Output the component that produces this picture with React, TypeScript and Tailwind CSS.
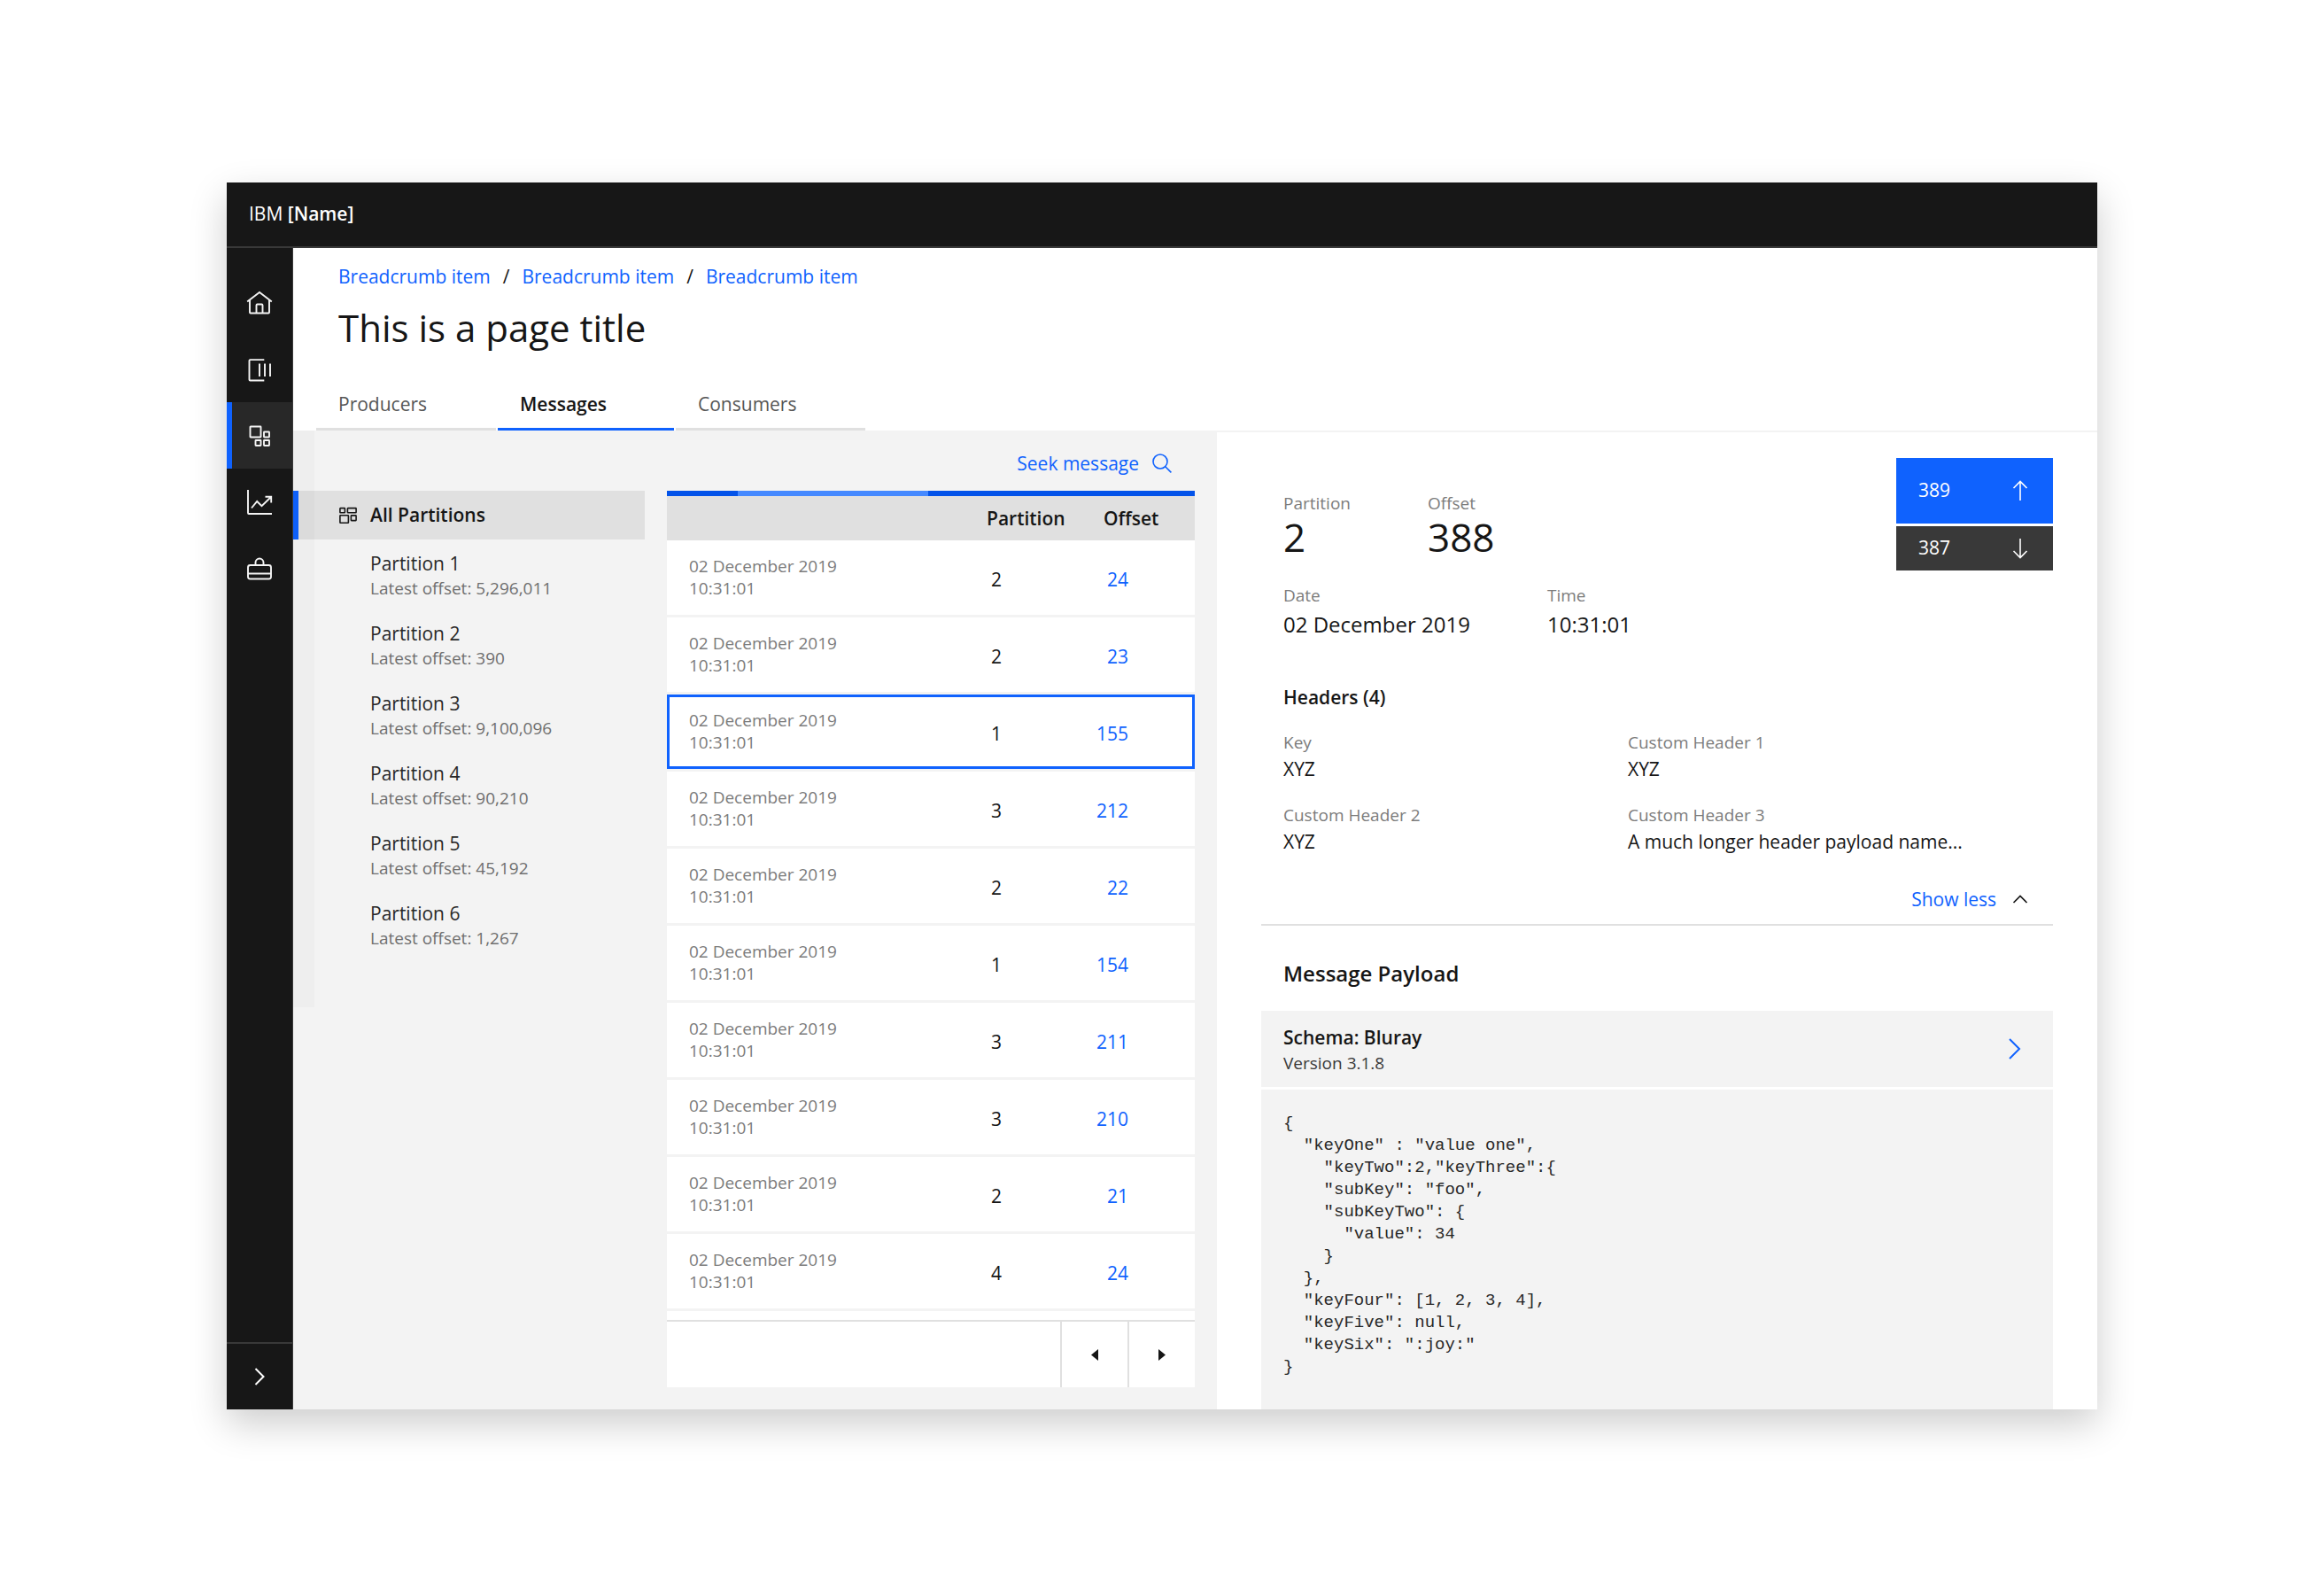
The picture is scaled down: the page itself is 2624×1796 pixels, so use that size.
import type { ReactNode } from 'react';

const partitions = [
  { name: 'Partition 1', offset: '5,296,011' },
  { name: 'Partition 2', offset: '390' },
  { name: 'Partition 3', offset: '9,100,096' },
  { name: 'Partition 4', offset: '90,210' },
  { name: 'Partition 5', offset: '45,192' },
  { name: 'Partition 6', offset: '1,267' },
];

const messages = [
  { partition: 2, offset: 24 },
  { partition: 2, offset: 23 },
  { partition: 1, offset: 155, selected: true },
  { partition: 3, offset: 212 },
  { partition: 2, offset: 22 },
  { partition: 1, offset: 154 },
  { partition: 3, offset: 211 },
  { partition: 3, offset: 210 },
  { partition: 2, offset: 21 },
  { partition: 4, offset: 24 },
];

const headers = [
  { label: 'Key', value: 'XYZ' },
  { label: 'Custom Header 1', value: 'XYZ' },
  { label: 'Custom Header 2', value: 'XYZ' },
  { label: 'Custom Header 3', value: 'A much longer header payload name...' },
];

const payload = `{
  "keyOne" : "value one",
    "keyTwo":2,"keyThree":{
    "subKey": "foo",
    "subKeyTwo": {
      "value": 34
    }
  },
  "keyFour": [1, 2, 3, 4],
  "keyFive": null,
  "keySix": ":joy:"
}`;

function NavIcon({ children }: { children: ReactNode }) {
  return (
    <svg width="30" height="30" viewBox="0 0 30 30" fill="none" stroke="#f4f4f4" strokeWidth="1.9" aria-hidden="true">
      {children}
    </svg>
  );
}

const navItems = [
  {
    label: 'Home',
    icon: (
      <NavIcon>
        <path d="M1.2 13.500 15 3l13.800 10.500" />
        <path d="M4 11.500v14q0 1 1 1h20q1 0 1-1v-14" />
        <path d="M11.500 26.500V17.500q0-1 1-1h5q1 0 1 1V26.500" />
      </NavIcon>
    ),
  },
  {
    label: 'Topics',
    icon: (
      <NavIcon>
        <path d="M20.300 4.100H4.500Q3.500 4.100 3.500 5.100V26.500Q3.500 27.500 4.500 27.500H20.300M15 8.500V23M21 8.500V23M27 8.500V23" />
      </NavIcon>
    ),
  },
  {
    label: 'Partitions',
    active: true,
    icon: (
      <NavIcon>
        <rect x="4.500" y="4.500" width="12" height="12" rx="0.500" />
        <rect x="20" y="10.500" width="6" height="6" rx="0.500" />
        <rect x="10.500" y="20" width="6" height="6" rx="0.500" />
        <rect x="20" y="20" width="6" height="6" rx="0.500" />
      </NavIcon>
    ),
  },
  {
    label: 'Metrics',
    icon: (
      <NavIcon>
        <path d="M2 1V27Q2 28 3 28H29M6 21.500 12.200 14 17.500 19.200 28 9M21.500 8.800H28.200V15.500" />
      </NavIcon>
    ),
  },
  {
    label: 'Toolbox',
    icon: (
      <NavIcon>
        <rect x="2" y="11" width="26" height="15.500" rx="2.500" />
        <path d="M10.500 11V8a4.500 4.500 0 0 1 9 0V11M2 20.500H28" />
      </NavIcon>
    ),
  },
];

function SideNav() {
  return (
    <nav aria-label="Main" className="flex w-[75px] shrink-0 flex-col border-r border-[#393939] bg-[#171717]">
      <ul className="flex-1 pt-6">
        {navItems.map((item) => (
          <li key={item.label}>
            <a
              href="#"
              aria-label={item.label}
              className={
                item.active
                  ? 'relative flex h-[75px] items-center justify-center bg-[#282828] before:absolute before:inset-y-0 before:left-0 before:w-1.5 before:bg-[#0f62fe]'
                  : 'flex h-[75px] items-center justify-center'
              }
            >
              {item.icon}
            </a>
          </li>
        ))}
      </ul>
      <button type="button" aria-label="Expand navigation" className="flex h-[76px] items-center justify-center border-t-2 border-[#393939]">
        <svg width="30" height="30" viewBox="0 0 30 30" fill="none" stroke="#fff" strokeWidth="2" aria-hidden="true">
          <path d="m10.500 6 9 9-9 9" />
        </svg>
      </button>
    </nav>
  );
}

function PageHeading() {
  return (
    <div className="px-[51px] pt-[17px]">
      <nav aria-label="Breadcrumb">
        <ol className="flex text-[21px] leading-[30px] text-[#0f62fe]">
          <li className="after:px-[14px] after:text-[#161616] after:content-['/']">
            <a href="#">Breadcrumb item</a>
          </li>
          <li className="after:px-[14px] after:text-[#161616] after:content-['/']">
            <a href="#">Breadcrumb item</a>
          </li>
          <li>
            <a href="#">Breadcrumb item</a>
          </li>
        </ol>
      </nav>
      <h1 className="mt-[18px] text-[42px] leading-[50px]">This is a page title</h1>
    </div>
  );
}

function Tabs() {
  return (
    <div role="tablist" className="mt-[46px] flex gap-0.5 px-[26px] text-[21px] leading-[30px] text-[#565656]">
      <button type="button" role="tab" aria-selected="false" className="w-[203px] border-b-[3px] border-[#e0e0e0] pb-3 pl-[25px] text-left">
        Producers
      </button>
      <button type="button" role="tab" aria-selected="true" className="w-[199px] border-b-[3px] border-[#0f62fe] pb-3 pl-[25px] text-left font-semibold text-[#161616]">
        Messages
      </button>
      <button type="button" role="tab" aria-selected="false" className="w-[214px] border-b-[3px] border-[#e0e0e0] pb-3 pl-[25px] text-left">
        Consumers
      </button>
    </div>
  );
}

function PartitionList() {
  return (
    <aside className="relative w-[397px] shrink-0 pt-[68px]">
      <div className="absolute top-0 left-0 h-[651px] w-6 bg-black/[0.02]" />
      <button type="button" className="flex h-[55px] w-full items-center border-l-[6px] border-[#0f62fe] bg-[#e0e0e0] pl-[46px] text-[21px] font-semibold">
        <svg width="20" height="20" viewBox="0 0 20 20" fill="none" stroke="#161616" strokeWidth="1.600" className="mr-[15px]" aria-hidden="true">
          <rect x="0.900" y="1.600" width="5.500" height="5.200" rx="0.500" />
          <rect x="9.400" y="1.600" width="9.700" height="5.200" rx="0.500" />
          <rect x="0.900" y="9.700" width="9.500" height="8.500" rx="0.500" />
          <rect x="13.400" y="9.900" width="5.700" height="5.700" rx="0.500" />
        </svg>
        All Partitions
      </button>
      <ul className="flex flex-col gap-[23px] pt-[13px] pl-[87px] leading-7">
        {partitions.map((p) => (
          <li key={p.name}>
            <a href="#" className="block">
              <span className="block text-[21px] text-[#282828]">{p.name}</span>
              <span className="block text-[19px] text-[#6f6f6f]">Latest offset: {p.offset}</span>
            </a>
          </li>
        ))}
      </ul>
    </aside>
  );
}

function rowCell(selected: boolean | undefined, position: 'first' | 'middle' | 'last') {
  if (!selected) return 'border-b-[3px] border-[#f3f3f3]';
  if (position === 'first')
    return 'border-b-[3px] border-[#f3f3f3] shadow-[inset_0_3px_#0f62fe,inset_0_-3px_#0f62fe,inset_3px_0_#0f62fe]';
  if (position === 'last')
    return 'border-b-[3px] border-[#f3f3f3] shadow-[inset_0_3px_#0f62fe,inset_0_-3px_#0f62fe,inset_-3px_0_#0f62fe]';
  return 'border-b-[3px] border-[#f3f3f3] shadow-[inset_0_3px_#0f62fe,inset_0_-3px_#0f62fe]';
}

function MessageTable() {
  return (
    <section className="ml-[25px] flex min-w-0 flex-1 flex-col pt-[23px] pr-[25px] pb-[25px]">
      <button type="button" className="mr-[26px] mb-[17px] flex items-center gap-[15px] self-end text-[21px] leading-7 text-[#0f62fe]">
        Seek message
        <svg width="22" height="22" viewBox="0 0 22 22" fill="none" stroke="currentColor" strokeWidth="1.600" aria-hidden="true">
          <circle cx="9" cy="9" r="8" />
          <path d="m14.700 14.700 6.700 6.700" />
        </svg>
      </button>
      <div role="progressbar" aria-label="Loading messages" className="flex h-1.5 bg-[#0353e9]">
        <div className="ml-[80px] w-[36%] bg-[#4589ff]" />
      </div>
      <table className="w-full table-fixed border-separate border-spacing-0 bg-white">
        <colgroup>
          <col />
          <col className="w-[120px]" />
          <col className="w-[115px]" />
        </colgroup>
        <thead>
          <tr className="h-[50px] bg-[#e0e0e0] text-left text-[21px]">
            <td />
            <th scope="col" className="pt-0.5 font-semibold">Partition</th>
            <th scope="col" className="pt-0.5 pl-3 font-semibold">Offset</th>
          </tr>
        </thead>
        <tbody>
          {messages.map((m, i) => (
            <tr key={i} className="h-[87px] text-[21px]">
              <td className={rowCell(m.selected, 'first')}>
                <div className="pl-[25px] text-[19px] leading-[25px] text-[#7c7c7c]">
                  02 December 2019
                  <br />
                  10:31:01
                </div>
              </td>
              <td className={rowCell(m.selected, 'middle')}>
                <div className="pt-1.5 pl-[5px]">{m.partition}</div>
              </td>
              <td className={rowCell(m.selected, 'last')}>
                <a href="#" className="block pt-1.5 pr-[75px] text-right text-[#0f62fe]">{m.offset}</a>
              </td>
            </tr>
          ))}
        </tbody>
      </table>
      <div className="mt-auto flex h-[86px] justify-end bg-white pt-2.5">
        <div className="flex flex-1 justify-end border-t-2 border-[#e0e0e0]">
          <button type="button" aria-label="Previous page" className="flex w-[76px] items-center justify-center border-l-2 border-[#e0e0e0]">
            <svg width="8" height="13" viewBox="0 0 8 13" fill="#161616" aria-hidden="true">
              <path d="M8 0v13L0 6.500z" />
            </svg>
          </button>
          <button type="button" aria-label="Next page" className="flex w-[76px] items-center justify-center border-l-2 border-[#e0e0e0]">
            <svg width="8" height="13" viewBox="0 0 8 13" fill="#161616" aria-hidden="true">
              <path d="M0 0v13l8-6.500z" />
            </svg>
          </button>
        </div>
      </div>
    </section>
  );
}

function Fact({ label, children, className }: { label: string; children: ReactNode; className: string }) {
  return (
    <div>
      <dt className="text-[19px] leading-6 text-[#7c7c7c]">{label}</dt>
      <dd className={className}>{children}</dd>
    </div>
  );
}

function MessageDetail() {
  return (
    <section className="flex min-w-0 flex-col border-t-2 border-[#f3f3f3] bg-white px-[50px]">
      <div className="flex justify-between pl-[25px]">
        <div className="pt-[68px]">
          <dl className="grid grid-cols-[163px_auto]">
            <Fact label="Partition" className="text-[44px] leading-[52px]">2</Fact>
            <Fact label="Offset" className="text-[44px] leading-[52px]">388</Fact>
          </dl>
          <dl className="mt-7 grid grid-cols-[298px_auto]">
            <Fact label="Date" className="pt-[5px] text-[24px] leading-8">02 December 2019</Fact>
            <Fact label="Time" className="pt-[5px] text-[24px] leading-8">10:31:01</Fact>
          </dl>
        </div>
        <div className="flex w-[177px] flex-col gap-[3px] pt-[29px] text-[21px] text-white">
          <button type="button" className="flex h-[74px] items-center justify-between bg-[#0f62fe] px-[25px]">
            389
            <svg width="24" height="24" viewBox="0 0 24 24" fill="none" stroke="currentColor" strokeWidth="1.600" aria-hidden="true">
              <path d="M12 23V1.500M4.500 9 12 1.500 19.500 9" />
            </svg>
          </button>
          <button type="button" className="flex h-[50px] items-center justify-between bg-[#393939] px-[25px]">
            387
            <svg width="24" height="24" viewBox="0 0 24 24" fill="none" stroke="currentColor" strokeWidth="1.600" aria-hidden="true">
              <path d="M12 1V22.500M4.500 15l7.500 7.500 7.500-7.500" />
            </svg>
          </button>
        </div>
      </div>

      <h2 className="mt-[51px] pl-[25px] text-[21px] leading-[30px] font-semibold">Headers (4)</h2>
      <dl className="mt-6 grid grid-cols-[389fr_480fr] gap-y-[25px] pl-[25px]">
        {headers.map((h) => (
          <Fact key={h.label} label={h.label} className="pt-[3px] text-[21px] leading-[30px]">
            {h.value}
          </Fact>
        ))}
      </dl>
      <div className="mt-[35px] flex justify-end border-b-2 border-[#e0e0e0] pr-7 pb-[13px]">
        <button type="button" className="flex items-center gap-[18px] text-[21px] leading-[30px] text-[#0f62fe]">
          Show less
          <svg width="18" height="12" viewBox="0 0 18 12" fill="none" stroke="#161616" strokeWidth="1.600" aria-hidden="true">
            <path d="m1.500 10 7.500-7.500 7.500 7.500" />
          </svg>
        </button>
      </div>

      <h2 className="mt-[38px] pl-[25px] text-[24px] leading-8 font-semibold">Message Payload</h2>
      <a href="#" className="mt-[26px] flex items-center justify-between bg-[#f3f3f3] py-[15px] pr-9 pl-[25px]">
        <span>
          <span className="block text-[21px] leading-[30px] font-semibold">Schema: Bluray</span>
          <span className="block pt-0.5 text-[19px] leading-6 text-[#393939]">Version 3.1.8</span>
        </span>
        <svg width="15" height="24" viewBox="0 0 15 24" fill="none" stroke="#0f62fe" strokeWidth="2" aria-hidden="true">
          <path d="m2 1 11 11L2 23" />
        </svg>
      </a>
      <pre className="mt-[3px] flex-1 bg-[#f3f3f3] px-[25px] pt-[26px] pb-[34px] font-['Liberation_Mono',monospace] text-[19px] leading-[25px] text-[#282828]">
        {payload}
      </pre>
    </section>
  );
}

export default function App() {
  return (
    <div className="min-h-screen bg-white px-64 py-[206px] font-['Open_Sans',sans-serif] text-[#161616]">
      <div className="shadow-[0_16px_40px_rgba(0,0,0,0.2)]">
        <header className="flex h-[74px] items-center border-b-2 border-[#393939] bg-[#171717] px-[25px] text-[21px] text-white">
          <span>
            IBM <b className="font-semibold">[Name]</b>
          </span>
        </header>
        <div className="flex">
          <SideNav />
          <main className="min-w-0 flex-1 bg-white">
            <PageHeading />
            <Tabs />
            <div className="grid grid-cols-[1043fr_994fr]">
              <div className="flex bg-[#f3f3f3]">
                <PartitionList />
                <MessageTable />
              </div>
              <MessageDetail />
            </div>
          </main>
        </div>
      </div>
    </div>
  );
}
